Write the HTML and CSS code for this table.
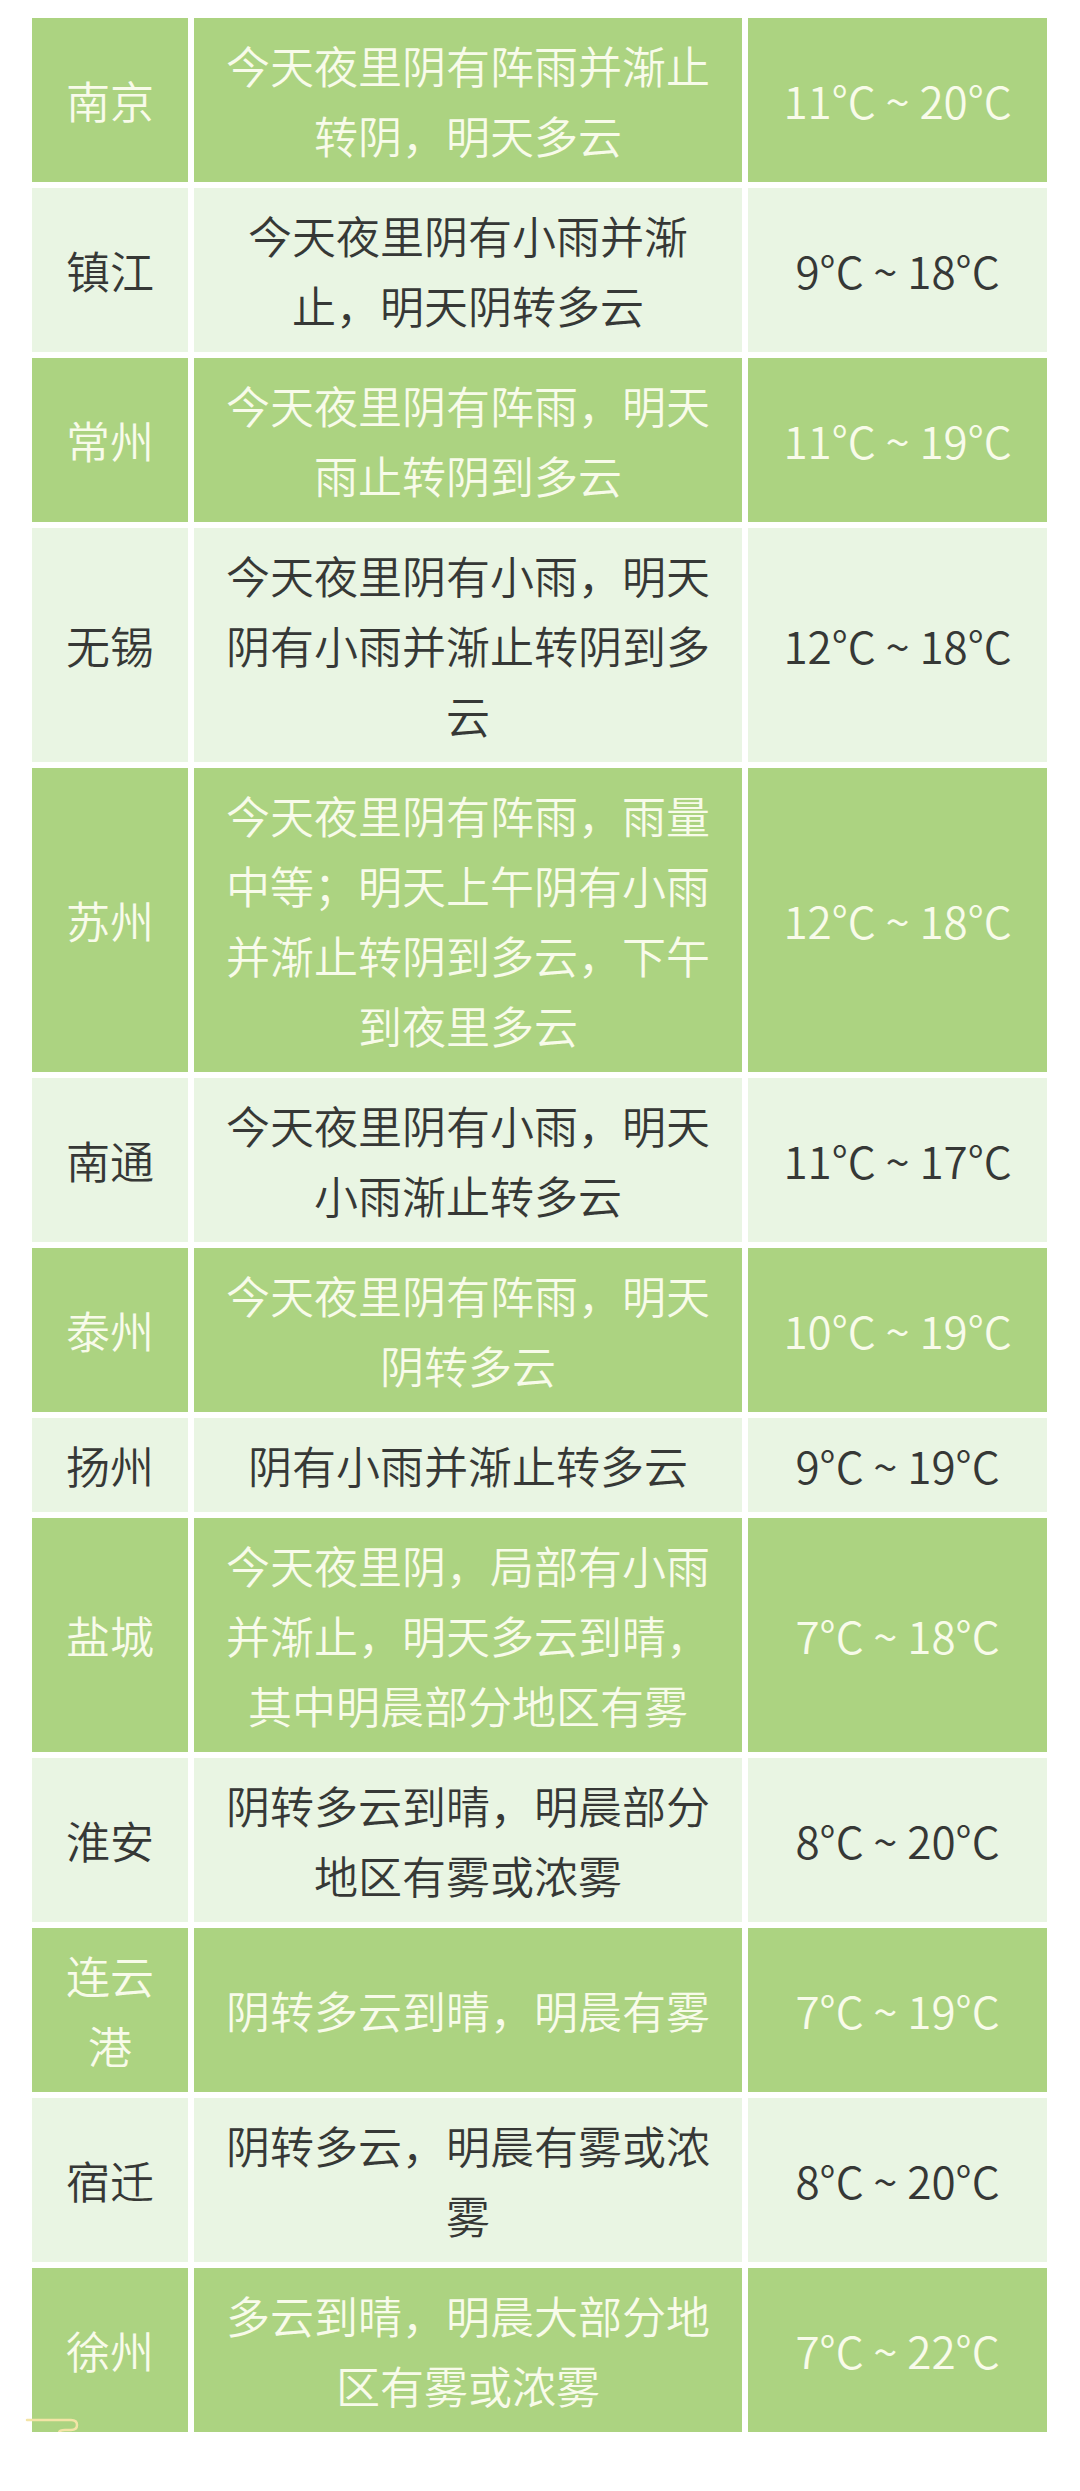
FILE: index.html
```html
<!DOCTYPE html>
<html lang="zh-CN">
<head>
<meta charset="utf-8">
<title>江苏各地天气</title>
<link rel="stylesheet" href="styles.css">
</head>
<body>
<div class="page">
  <div class="table">
    <div class="row dark"><div class="cell city">南京</div><div class="cell desc">今天夜里阴有阵雨并渐止转阴，明天多云</div><div class="cell temp">11°C ~ 20°C</div></div>
    <div class="row light"><div class="cell city">镇江</div><div class="cell desc">今天夜里阴有小雨并渐止，明天阴转多云</div><div class="cell temp">9°C ~ 18°C</div></div>
    <div class="row dark"><div class="cell city">常州</div><div class="cell desc">今天夜里阴有阵雨，明天雨止转阴到多云</div><div class="cell temp">11°C ~ 19°C</div></div>
    <div class="row light"><div class="cell city">无锡</div><div class="cell desc">今天夜里阴有小雨，明天阴有小雨并渐止转阴到多云</div><div class="cell temp">12°C ~ 18°C</div></div>
    <div class="row dark"><div class="cell city">苏州</div><div class="cell desc">今天夜里阴有阵雨，雨量中等；明天上午阴有小雨并渐止转阴到多云，下午到夜里多云</div><div class="cell temp">12°C ~ 18°C</div></div>
    <div class="row light"><div class="cell city">南通</div><div class="cell desc">今天夜里阴有小雨，明天小雨渐止转多云</div><div class="cell temp">11°C ~ 17°C</div></div>
    <div class="row dark"><div class="cell city">泰州</div><div class="cell desc">今天夜里阴有阵雨，明天阴转多云</div><div class="cell temp">10°C ~ 19°C</div></div>
    <div class="row light"><div class="cell city">扬州</div><div class="cell desc">阴有小雨并渐止转多云</div><div class="cell temp">9°C ~ 19°C</div></div>
    <div class="row dark"><div class="cell city">盐城</div><div class="cell desc">今天夜里阴，局部有小雨并渐止，明天多云到晴，其中明晨部分地区有雾</div><div class="cell temp">7°C ~ 18°C</div></div>
    <div class="row light"><div class="cell city">淮安</div><div class="cell desc">阴转多云到晴，明晨部分地区有雾或浓雾</div><div class="cell temp">8°C ~ 20°C</div></div>
    <div class="row dark"><div class="cell city">连云港</div><div class="cell desc">阴转多云到晴，明晨有雾</div><div class="cell temp">7°C ~ 19°C</div></div>
    <div class="row light"><div class="cell city">宿迁</div><div class="cell desc">阴转多云，明晨有雾或浓雾</div><div class="cell temp">8°C ~ 20°C</div></div>
    <div class="row dark"><div class="cell city">徐州</div><div class="cell desc">多云到晴，明晨大部分地区有雾或浓雾</div><div class="cell temp">7°C ~ 22°C</div></div>
  </div>
  <svg class="deco" width="1080" height="50" viewBox="0 2400 1080 50" aria-hidden="true">
    <path d="M27 2420 H71 Q77 2420 77 2425 Q77 2430 71 2430 H65 Q59 2430 59 2433 Q59 2436 63 2436 H1054" fill="none" stroke="#f3e4a6" stroke-width="2.5" stroke-linecap="round"/>
  </svg>
</div>
</body>
</html>
```
FILE: styles.css
```css
html, body {
  margin: 0;
  padding: 0;
  background: #ffffff;
}

body {
  font-family: "Noto Sans CJK SC", "Noto Sans", sans-serif;
  font-weight: 350;
}

.page {
  position: relative;
  width: 1080px;
  padding-top: 18px;
}

.table {
  margin-left: 32px;
  width: 1015px;
  display: flex;
  flex-direction: column;
  gap: 6px;
}

.row {
  display: grid;
  grid-template-columns: 156px 548px 299px;
  column-gap: 6px;
}

.cell {
  display: flex;
  align-items: center;
  justify-content: center;
  text-align: center;
  font-size: 44px;
  line-height: 70px;
  padding: 12px 16px;
  box-sizing: border-box;
}

.city {
  padding: 12px 14px;
}

.temp {
  white-space: nowrap;
}

.dark .cell {
  background: #acd381;
  color: #f8fbea;
}

.light .cell {
  background: #e9f5e3;
  color: #363836;
}

.deco {
  position: absolute;
  left: 0;
  top: 2400px;
}
```
